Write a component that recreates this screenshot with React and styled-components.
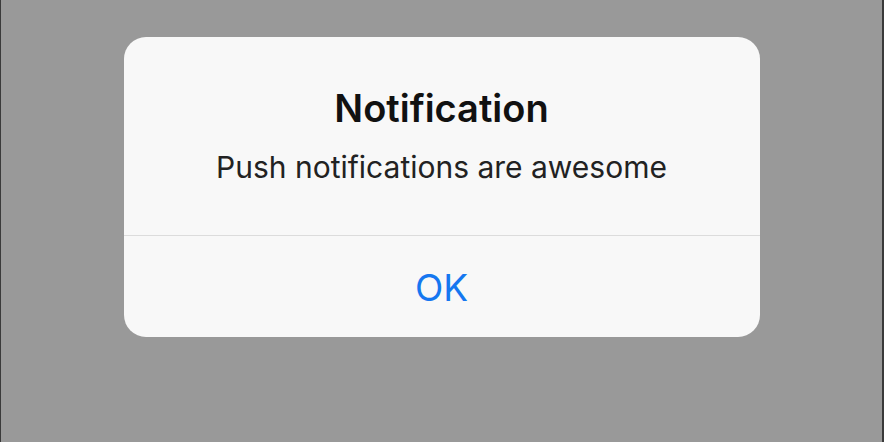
import React from "react";
import styled, { createGlobalStyle } from "styled-components";

const Global = createGlobalStyle`
  html, body { margin: 0; padding: 0; }
  body { background: #999999; font-family: Inter, "Open Sans", "Liberation Sans", sans-serif; }
`;

const Screen = styled.div`
  width: 884px;
  height: 442px;
  box-sizing: border-box;
  background: #999999;
  border-left: 1px solid #3a3a3a;
  border-right: 2px solid #3a3a3a;
  padding-top: 37px;
  display: flex;
  justify-content: center;
  align-items: flex-start;
`;

const Dialog = styled.div`
  width: 636px;
  height: 300px;
  background: #f8f8f8;
  border-radius: 22px;
  display: flex;
  flex-direction: column;
  overflow: hidden;
`;

const Body = styled.div`
  height: 199px;
  border-bottom: 1px solid #dcdcdc;
  display: flex;
  flex-direction: column;
  align-items: center;
  padding-top: 49px;
  box-sizing: border-box;
`;

const Title = styled.div`
  font-size: 38px;
  font-weight: 600;
  color: #111;
  line-height: 44px;
`;

const Message = styled.div`
  margin-top: 19px;
  font-size: 30px;
  font-weight: 400;
  color: #222;
  line-height: 36px;
`;

const Action = styled.button`
  flex: 1;
  border: none;
  background: transparent;
  color: #1577f0;
  font-family: inherit;
  font-size: 37px;
  font-weight: 400;
  padding: 2px 0 0;
`;

export default function App() {
  return (
    <>
      <Global />
      <Screen>
        <Dialog>
          <Body>
            <Title>Notification</Title>
            <Message>Push notifications are awesome</Message>
          </Body>
          <Action>OK</Action>
        </Dialog>
      </Screen>
    </>
  );
}
